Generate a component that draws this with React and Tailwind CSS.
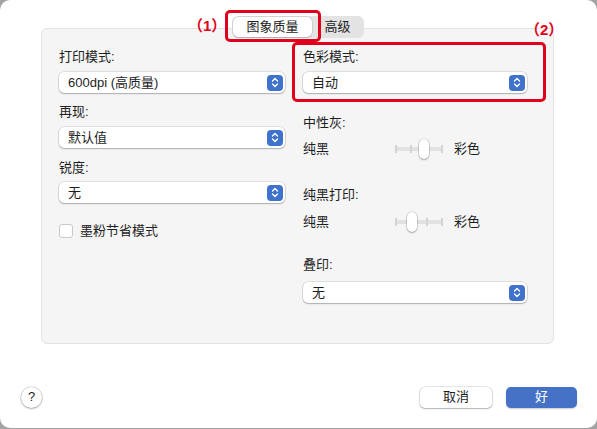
import React from "react";

const font = { fontFamily: '"Liberation Sans", "Noto Sans CJK SC", sans-serif' };

const Stepper = () => (
  <div className="w-[16px] h-[16px] rounded-[4px] bg-[#3f72cc] flex items-center justify-center">
    <svg width="8" height="11" viewBox="0 0 8 11" fill="none">
      <path d="M1.5 4 L4 1.5 L6.5 4" stroke="white" strokeWidth="1.4" strokeLinecap="round" strokeLinejoin="round" />
      <path d="M1.5 7 L4 9.5 L6.5 7" stroke="white" strokeWidth="1.4" strokeLinecap="round" strokeLinejoin="round" />
    </svg>
  </div>
);

const Select = ({ value, className = "" }) => (
  <div
    className={`h-[21px] bg-white rounded-[5px] shadow-[0_0_0_0.5px_rgba(0,0,0,0.18),0_1px_1.5px_rgba(0,0,0,0.22)] flex items-center justify-between pl-[9px] pr-[2px] ${className}`}
  >
    <span className="text-[13px] text-[#1e1e1e]">{value}</span>
    <Stepper />
  </div>
);

const Label = ({ children, className = "" }) => (
  <div className={`h-[18px] leading-[18px] text-[13px] text-[#1e1e1e] ${className}`}>{children}</div>
);

// slider: 4 ticks, thumb at given offset
const Slider = ({ pos }) => (
  <div className="relative w-[48px] h-[22px]">
    <div className="absolute left-0 right-0 top-[9px] h-[4px] bg-[#e2e2e2]" />
    {[0, 15, 31, 46].map((x) => (
      <div key={x} className="absolute top-[7px] w-[2px] h-[8px] bg-[#d4d4d4]" style={{ left: x }} />
    ))}
    <div
      className="absolute top-[1px] w-[10px] h-[20px] rounded-full bg-white shadow-[0_0_0_0.5px_rgba(0,0,0,0.2),0_1px_2px_rgba(0,0,0,0.25)]"
      style={{ left: pos }}
    />
  </div>
);

const SliderRow = ({ pos }) => (
  <div className="h-[22px] flex items-center text-[13px] text-[#1e1e1e]">
    <span className="w-[92px]">纯黑</span>
    <Slider pos={pos} />
    <span className="ml-[11px]">彩色</span>
  </div>
);

export default function App() {
  return (
    <div className="w-[597px] h-[429px] bg-[#a3a3a3]" style={font}>
      <div className="relative h-[428px] bg-white rounded-[10px] flex flex-col">
        {/* group box */}
        <div className="relative ml-[41px] mt-[28px] w-[513px] h-[316px] rounded-[6px] border border-[#e3e3e3] bg-[#f5f5f5]">
          <div className="grid grid-cols-[226px_224px] gap-x-[18px] pl-[17px] pt-[19px]">
            {/* left */}
            <div className="flex flex-col">
              <Label>打印模式:</Label>
              <Select value="600dpi (高质量)" className="mt-[6px]" />
              <Label className="mt-[10px]">再现:</Label>
              <Select value="默认值" className="mt-[6px]" />
              <Label className="mt-[11px]">锐度:</Label>
              <Select value="无" className="mt-[5px]" />
              <div className="mt-[19px] h-[18px] flex items-center">
                <div className="w-[14px] h-[14px] rounded-[3px] bg-white border border-[#c9c9c9]" />
                <span className="ml-[7px] text-[13px] text-[#1e1e1e]">墨粉节省模式</span>
              </div>
            </div>
            {/* right */}
            <div className="flex flex-col">
              <Label>色彩模式:</Label>
              <Select value="自动" className="mt-[6px]" />
              <Label className="mt-[21px]">中性灰:</Label>
              <div className="mt-[6px]">
                <SliderRow pos={24} />
              </div>
              <Label className="mt-[26px]">纯黑打印:</Label>
              <div className="mt-[7px]">
                <SliderRow pos={12} />
              </div>
              <Label className="mt-[23px]">叠印:</Label>
              <Select value="无" className="mt-[8px]" />
            </div>
          </div>

          {/* tabs */}
          <div className="absolute left-[190px] top-[-13px] h-[22px] w-[132px] rounded-[6px] bg-[#e3e3e3] flex items-center p-[1px]">
            <div className="w-[79px] h-[20px] rounded-[5px] bg-white shadow-[0_0_0_0.5px_rgba(0,0,0,0.15),0_1px_1px_rgba(0,0,0,0.15)] flex items-center justify-center text-[13px] text-[#1e1e1e]">
              图象质量
            </div>
            <div className="flex-1 text-center text-[13px] text-[#1e1e1e]">高级</div>
          </div>
        </div>

        {/* annotations */}
        <div className="absolute left-[225px] top-[10px] w-[96px] h-[32px] rounded-[5px] border-[3px] border-[#e0001b]" />
        <div className="absolute left-[292px] top-[42px] w-[254px] h-[60px] rounded-[5px] border-[3px] border-[#e0001b]" />
        <div className="absolute left-[188px] top-[17px] text-[15px] font-bold text-[#e0001b] leading-[18px]">（1）</div>
        <div className="absolute left-[525px] top-[21px] text-[15px] font-bold text-[#e0001b] leading-[18px]">（2）</div>

        {/* bottom */}
        <div className="mt-auto mb-[20px] h-[22px] flex items-center pl-[21px] pr-[20px]">
          <div className="w-[21px] h-[21px] rounded-full bg-white shadow-[0_0_0_0.5px_rgba(0,0,0,0.2),0_1px_2px_rgba(0,0,0,0.25)] flex items-center justify-center text-[13px] text-[#1e1e1e]">
            ?
          </div>
          <div className="ml-auto w-[72px] h-[21px] rounded-[5px] bg-white shadow-[0_0_0_0.5px_rgba(0,0,0,0.2),0_1px_1.5px_rgba(0,0,0,0.22)] flex items-center justify-center text-[13px] text-[#1e1e1e]">
            取消
          </div>
          <div className="ml-[14px] w-[71px] h-[21px] rounded-[5px] bg-[#4572c6] shadow-[0_1px_1.5px_rgba(0,0,0,0.2)] flex items-center justify-center text-[13px] text-white">
            好
          </div>
        </div>
      </div>
    </div>
  );
}
